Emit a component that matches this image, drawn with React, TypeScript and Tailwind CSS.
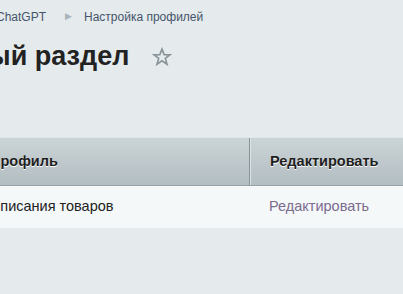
import React from 'react';

function Star() {
  return (
    <svg width="20" height="20" viewBox="0 0 24 24" fill="none" stroke="#8a949b" strokeWidth="2" strokeLinejoin="miter">
      <polygon points="12,2.5 14.6,9.2 21.5,9.4 16,13.7 18,20.6 12,16.6 6,20.6 8,13.7 2.5,9.4 9.4,9.2" />
    </svg>
  );
}

export default function App() {
  return (
    <div className="w-[403px] h-[294px] overflow-hidden bg-[#e5ebed] font-['Liberation_Sans',Arial,sans-serif]">
      {/* Breadcrumbs */}
      <div className="flex items-center h-[34px] text-[12px] text-[#46536a] ml-[-4px]">
        <span>ChatGPT</span>
        <span className="ml-[19px] mr-[12px] text-[9px] text-[#a9b3ba]">▶</span>
        <span>Настройка профилей</span>
      </div>

      {/* Title */}
      <div className="flex items-center h-[44px] ml-[-65px]">
        <h1 className="text-[27px] font-bold text-[#222] leading-none">Новый раздел</h1>
        <span className="ml-[23px] mt-[2px]"><Star /></span>
      </div>

      <div className="h-[59px]" />

      {/* Table */}
      <div className="flex h-[49px] bg-gradient-to-b from-[#cbd4d7] to-[#b3bec2] border-t border-t-[#dfe6e8] border-b border-b-[#98a3a7] text-[14.5px] font-bold text-[#1e1e1e] [text-shadow:0_1px_0_#ffffff]">
        <div className="w-[260px] shrink-0 flex items-center ml-[-10px] border-r border-r-[#88949a]">Профиль</div>
        <div className="flex-1 flex items-center pl-[19px] border-l border-l-[#dbe2e4]">Редактировать</div>
      </div>
      <div className="flex h-[42px] bg-[#f4f8f9] text-[14.5px]">
        <div className="w-[261px] shrink-0 flex items-center ml-[-11px] text-[#222]">Описания товаров</div>
        <div className="flex-1 flex items-center pl-[19px] text-[#7b6b8d]">Редактировать</div>
      </div>
    </div>
  );
}
